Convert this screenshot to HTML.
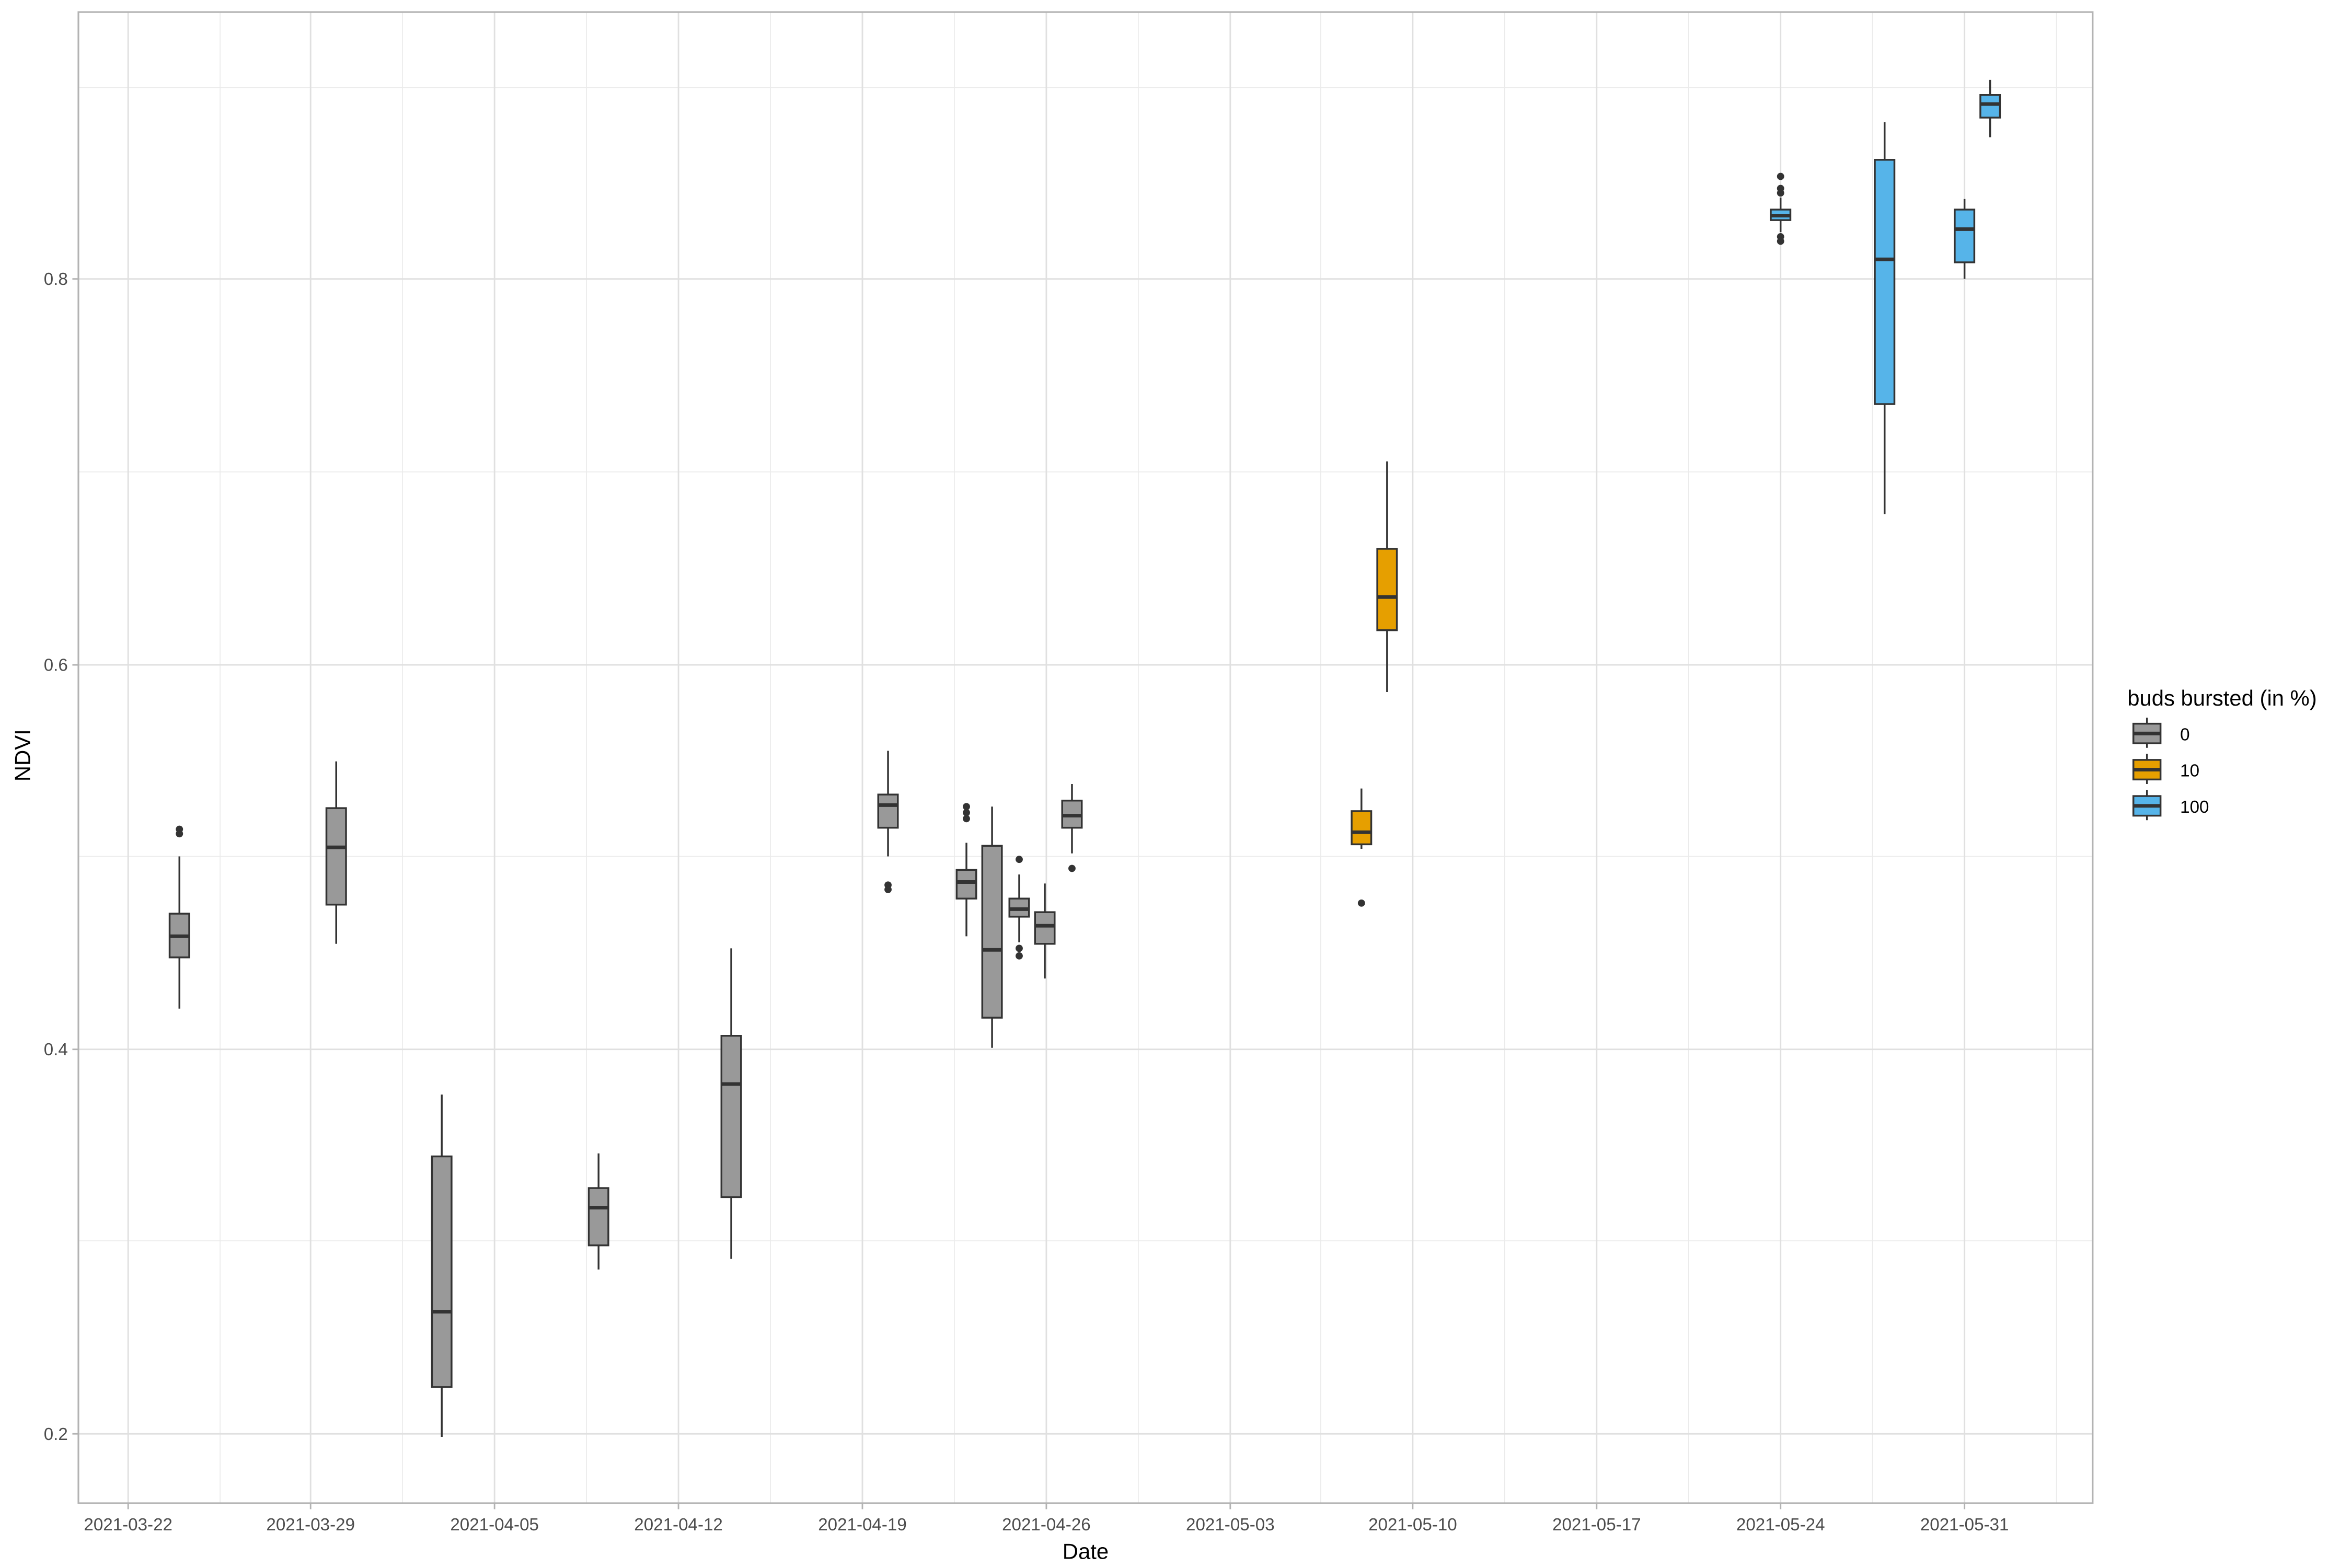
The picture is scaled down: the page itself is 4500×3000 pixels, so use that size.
<!DOCTYPE html>
<html><head><meta charset="utf-8"><style>
html,body{margin:0;padding:0;background:#fff;}
svg{display:block;}
text{font-family:"Liberation Sans",Arial,sans-serif;}
</style></head><body>
<svg width="4500" height="3000" viewBox="0 0 1560 1040" preserveAspectRatio="none" xmlns="http://www.w3.org/2000/svg">
<rect width="1560" height="1040" fill="#fff"/>
<g stroke="#ebebeb" stroke-width="0.6">
<line x1="52" x2="1388" y1="823" y2="823"/><line x1="52" x2="1388" y1="568" y2="568"/><line x1="52" x2="1388" y1="313" y2="313"/><line x1="52" x2="1388" y1="58" y2="58"/>
<line y1="8" y2="997" x1="146" x2="146"/><line y1="8" y2="997" x1="267" x2="267"/><line y1="8" y2="997" x1="389" x2="389"/><line y1="8" y2="997" x1="511" x2="511"/><line y1="8" y2="997" x1="633" x2="633"/><line y1="8" y2="997" x1="755" x2="755"/><line y1="8" y2="997" x1="876" x2="876"/><line y1="8" y2="997" x1="998" x2="998"/><line y1="8" y2="997" x1="1120" x2="1120"/><line y1="8" y2="997" x1="1242" x2="1242"/><line y1="8" y2="997" x1="1364" x2="1364"/>
</g>
<g stroke="#e0e0e0" stroke-width="1">
<line x1="52" x2="1388" y1="951" y2="951"/><line x1="52" x2="1388" y1="696" y2="696"/><line x1="52" x2="1388" y1="441" y2="441"/><line x1="52" x2="1388" y1="185" y2="185"/>
<line y1="8" y2="997" x1="85" x2="85"/><line y1="8" y2="997" x1="206" x2="206"/><line y1="8" y2="997" x1="328" x2="328"/><line y1="8" y2="997" x1="450" x2="450"/><line y1="8" y2="997" x1="572" x2="572"/><line y1="8" y2="997" x1="694" x2="694"/><line y1="8" y2="997" x1="816" x2="816"/><line y1="8" y2="997" x1="937" x2="937"/><line y1="8" y2="997" x1="1059" x2="1059"/><line y1="8" y2="997" x1="1181" x2="1181"/><line y1="8" y2="997" x1="1303" x2="1303"/>
</g>
<g stroke="#333" stroke-width="1.2">
<!-- whiskers -->
<line x1="119" x2="119" y1="568" y2="669"/>
<line x1="223" x2="223" y1="505" y2="626"/>
<line x1="293" x2="293" y1="726" y2="953"/>
<line x1="397" x2="397" y1="765" y2="842"/>
<line x1="485" x2="485" y1="629" y2="835"/>
<line x1="589" x2="589" y1="498" y2="568"/>
<line x1="641" x2="641" y1="559" y2="621"/>
<line x1="658" x2="658" y1="535" y2="695"/>
<line x1="676" x2="676" y1="580" y2="625"/>
<line x1="693" x2="693" y1="586" y2="649"/>
<line x1="711" x2="711" y1="520" y2="566"/>
<line x1="903" x2="903" y1="523" y2="563"/>
<line x1="920" x2="920" y1="306" y2="459"/>
<line x1="1181" x2="1181" y1="131" y2="154"/>
<line x1="1250" x2="1250" y1="81" y2="341"/>
<line x1="1303" x2="1303" y1="132" y2="185"/>
<line x1="1320" x2="1320" y1="53" y2="91"/>
</g>
<g stroke="#333" stroke-width="1.2">
<rect x="112.5" y="606" width="13" height="29" fill="#999"/>
<rect x="216.5" y="536" width="13" height="64" fill="#999"/>
<rect x="286.5" y="767" width="13" height="153" fill="#999"/>
<rect x="390.5" y="788" width="13" height="38" fill="#999"/>
<rect x="478.5" y="687" width="13" height="107" fill="#999"/>
<rect x="582.5" y="527" width="13" height="22" fill="#999"/>
<rect x="634.5" y="577" width="13" height="19" fill="#999"/>
<rect x="651.5" y="561" width="13" height="114" fill="#999"/>
<rect x="669.5" y="596" width="13" height="12" fill="#999"/>
<rect x="686.5" y="605" width="13" height="21" fill="#999"/>
<rect x="704.5" y="531" width="13" height="18" fill="#999"/>
<rect x="896.5" y="538" width="13" height="22" fill="#E69F00"/>
<rect x="913.5" y="364" width="13" height="54" fill="#E69F00"/>
<rect x="1174.5" y="139" width="13" height="7" fill="#56B4E9"/>
<rect x="1243.5" y="106" width="13" height="162" fill="#56B4E9"/>
<rect x="1296.5" y="139" width="13" height="35" fill="#56B4E9"/>
<rect x="1313.5" y="63" width="13" height="15" fill="#56B4E9"/>
</g>
<g stroke="#333" stroke-width="2.4">
<line x1="112.5" x2="125.5" y1="621" y2="621"/>
<line x1="216.5" x2="229.5" y1="562" y2="562"/>
<line x1="286.5" x2="299.5" y1="870" y2="870"/>
<line x1="390.5" x2="403.5" y1="801" y2="801"/>
<line x1="478.5" x2="491.5" y1="719" y2="719"/>
<line x1="582.5" x2="595.5" y1="534" y2="534"/>
<line x1="634.5" x2="647.5" y1="585" y2="585"/>
<line x1="651.5" x2="664.5" y1="630" y2="630"/>
<line x1="669.5" x2="682.5" y1="603" y2="603"/>
<line x1="686.5" x2="699.5" y1="614" y2="614"/>
<line x1="704.5" x2="717.5" y1="541" y2="541"/>
<line x1="896.5" x2="909.5" y1="552" y2="552"/>
<line x1="913.5" x2="926.5" y1="396" y2="396"/>
<line x1="1174.5" x2="1187.5" y1="143" y2="143"/>
<line x1="1243.5" x2="1256.5" y1="172" y2="172"/>
<line x1="1296.5" x2="1309.5" y1="152" y2="152"/>
<line x1="1313.5" x2="1326.5" y1="69" y2="69"/>
</g>
<g fill="#333">
<circle cx="119" cy="550" r="2.4"/><circle cx="119" cy="553" r="2.4"/>
<circle cx="589" cy="587" r="2.4"/><circle cx="589" cy="590" r="2.4"/>
<circle cx="641" cy="535" r="2.4"/><circle cx="641" cy="539" r="2.4"/><circle cx="641" cy="543" r="2.4"/>
<circle cx="676" cy="570" r="2.4"/><circle cx="676" cy="629" r="2.4"/><circle cx="676" cy="634" r="2.4"/>
<circle cx="711" cy="576" r="2.4"/>
<circle cx="903" cy="599" r="2.4"/>
<circle cx="1181" cy="117" r="2.4"/><circle cx="1181" cy="125" r="2.4"/><circle cx="1181" cy="128" r="2.4"/><circle cx="1181" cy="157" r="2.4"/><circle cx="1181" cy="160" r="2.4"/>
</g>
<rect x="52" y="8" width="1336" height="989" fill="none" stroke="#b3b3b3" stroke-width="1.1"/>
<g stroke="#b3b3b3" stroke-width="1">
<line x1="48" x2="52" y1="951" y2="951"/><line x1="48" x2="52" y1="696" y2="696"/><line x1="48" x2="52" y1="441" y2="441"/><line x1="48" x2="52" y1="185" y2="185"/>
<line y1="997" y2="1001" x1="85" x2="85"/><line y1="997" y2="1001" x1="206" x2="206"/><line y1="997" y2="1001" x1="328" x2="328"/><line y1="997" y2="1001" x1="450" x2="450"/><line y1="997" y2="1001" x1="572" x2="572"/><line y1="997" y2="1001" x1="694" x2="694"/><line y1="997" y2="1001" x1="816" x2="816"/><line y1="997" y2="1001" x1="937" x2="937"/><line y1="997" y2="1001" x1="1059" x2="1059"/><line y1="997" y2="1001" x1="1181" x2="1181"/><line y1="997" y2="1001" x1="1303" x2="1303"/>
</g>
<g fill="#4d4d4d" font-size="11.5" text-anchor="end">
<text x="45" y="955">0.2</text><text x="45" y="700">0.4</text><text x="45" y="445">0.6</text><text x="45" y="189">0.8</text>
</g>
<g fill="#4d4d4d" font-size="11.5" text-anchor="middle">
<text x="85" y="1015">2021-03-22</text><text x="206" y="1015">2021-03-29</text><text x="328" y="1015">2021-04-05</text><text x="450" y="1015">2021-04-12</text><text x="572" y="1015">2021-04-19</text><text x="694" y="1015">2021-04-26</text><text x="816" y="1015">2021-05-03</text><text x="937" y="1015">2021-05-10</text><text x="1059" y="1015">2021-05-17</text><text x="1181" y="1015">2021-05-24</text><text x="1303" y="1015">2021-05-31</text>
</g>
<text x="720" y="1034" font-size="14.5" text-anchor="middle" fill="#000">Date</text>
<text transform="translate(20,501) rotate(-90)" font-size="14.5" text-anchor="middle" fill="#000">NDVI</text>
<text x="1411" y="468" font-size="14.5" fill="#000">buds bursted (in %)</text>
<g stroke="#333" stroke-width="1.2">
<line x1="1424" x2="1424" y1="476" y2="496"/><rect x="1415" y="480" width="18" height="13" fill="#999"/><line x1="1415" x2="1433" y1="486.5" y2="486.5" stroke-width="2.4"/>
<line x1="1424" x2="1424" y1="500" y2="520"/><rect x="1415" y="504" width="18" height="13" fill="#E69F00"/><line x1="1415" x2="1433" y1="510.5" y2="510.5" stroke-width="2.4"/>
<line x1="1424" x2="1424" y1="524" y2="544"/><rect x="1415" y="528" width="18" height="13" fill="#56B4E9"/><line x1="1415" x2="1433" y1="534.5" y2="534.5" stroke-width="2.4"/>
</g>
<g font-size="11.5" fill="#000">
<text x="1446" y="491">0</text><text x="1446" y="515">10</text><text x="1446" y="539">100</text>
</g>
</svg>
</body></html>
